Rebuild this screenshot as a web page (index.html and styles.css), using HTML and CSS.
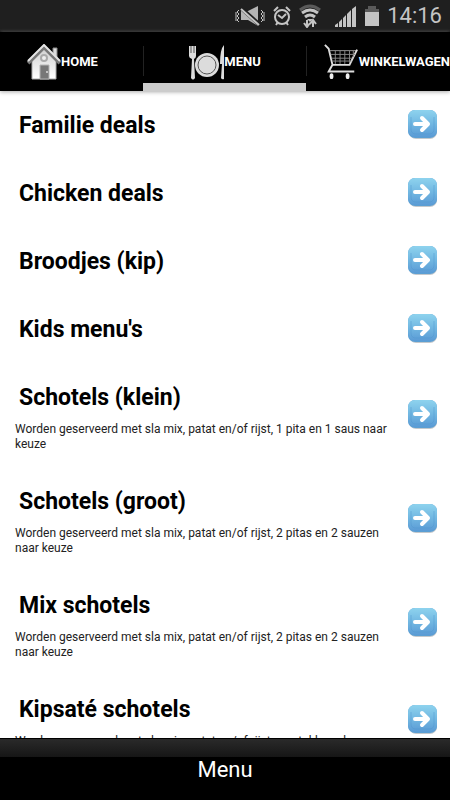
FILE: index.html
```html
<!DOCTYPE html>
<html lang="nl">
<head>
<meta charset="utf-8">
<meta name="viewport" content="width=device-width, initial-scale=1">
<title>Menu</title>
<link rel="stylesheet" href="styles.css">
</head>
<body>
<svg width="0" height="0" class="defs" aria-hidden="true">
  <defs>
    <linearGradient id="blue" x1="0" y1="0" x2="0" y2="1">
      <stop offset="0" stop-color="#8ed3ee"/><stop offset=".5" stop-color="#72b8e2"/><stop offset="1" stop-color="#5b9bd5"/>
    </linearGradient>
    <linearGradient id="wall" x1="0" y1="0" x2="0" y2="1">
      <stop offset="0" stop-color="#d0d0d0"/><stop offset="1" stop-color="#fff"/>
    </linearGradient>
    <symbol id="arrow" viewBox="0 0 30 30">
      <rect x="1" y="2" width="28" height="27" rx="7" fill="#c4c8cc"/>
      <rect x="0" y="0" width="29" height="28" rx="7" fill="#5b9fd3"/>
      <rect x="0" y="0" width="29" height="27" rx="7" fill="url(#blue)"/>
      <path d="M3 7v12q0 5 5 5h13q5 0 5-5V7" fill="none" stroke="#5297cf" opacity=".5"/>
      <path d="M7 14h12M14 8l6 6-6 6" fill="none" stroke="#fff" stroke-width="4" stroke-linejoin="round" stroke-linecap="round"/>
    </symbol>
  </defs>
</svg>
<header class="status">
  <svg width="30" height="22" viewBox="0 0 30 22" fill="none" stroke="#c4c4c4">
    <path d="M4 5l-2 2 2 2-2 2 2 2-2 2 2 2M1 7v9M26 5l2 2-2 2 2 2-2 2 2 2-2 2M29 7v9"/>
    <path d="M6 6h7l10-5v20l-10-6H6z" fill="#b4b4b4" stroke="none"/>
    <path d="M6 3l19 17" stroke="#1f1f1f" stroke-width="4"/>
    <path d="M6 4l18 16" stroke-width="2"/>
  </svg>
  <svg width="18" height="20" viewBox="0 0 18 20" fill="none" stroke="#c4c4c4" stroke-width="2">
    <circle cx="9" cy="11" r="7"/><path d="M1 5l4-4M17 5l-4-4M3 19l2-3M15 19l-2-3M5 9l4 3 4-4"/>
  </svg>
  <svg width="28" height="24" viewBox="0 0 28 24" fill="none" stroke="#c4c4c4">
    <path d="M1 6Q11-2 21 6" stroke="#5a5a5a" stroke-width="3"/>
    <path d="M3 9q8-6 16 0M6 13q5-4 10 0" stroke-width="3"/>
    <path d="M8 15h6l-3 3z" fill="#c4c4c4" stroke="none"/>
    <path d="M8 16v6M5 19l3 4 3-4M14 23v-6M11 20l3-4 3 4" stroke-width="2"/>
  </svg>
  <svg width="22" height="22" viewBox="0 0 22 22" fill="#c4c4c4">
    <path d="M0 22v-2l3-2v4zM4 22v-5l3-3v8zM8 22v-9l3-3v12zM12 22V9l4-4v17zM17 22V4l4-3v21z"/>
  </svg>
  <svg width="14" height="20" viewBox="1 0 14 20" fill="#c4c4c4">
    <path d="M4 0h8v3h3v3H1V3h3z" fill="#5a5a5a"/><path d="M1 6h14v14H1z"/>
  </svg>
  <time>14:16</time>
</header>
<nav class="tabs">
  <a href="#home" class="home">
    <svg width="34" height="36" viewBox="1 0 34 36">
      <path d="M27 4h4v12l-4-4z" fill="#ddd" stroke="#888"/>
      <path d="M6 17L18 5l12 12v18H6z" fill="url(#wall)" stroke="#aaa"/>
      <path d="M2 19L18 3l16 16" fill="none" stroke="#777" stroke-width="4"/>
      <path d="M2 17L18 1l16 16" fill="none" stroke="#e5e5e5" stroke-width="2"/>
      <circle cx="18" cy="14" r="3" fill="#eee" stroke="#aaa" stroke-width="2"/>
      <path d="M14 21h9v14h-9z" fill="#777" stroke="#b5b5b5"/><circle cx="21" cy="28" r="1" fill="#ddd"/>
    </svg><span>HOME</span></a>
  <a href="#menu" class="active" aria-current="page">
    <svg width="36" height="36" viewBox="0 0 36 36" fill="#dcdcdc">
      <path d="M1 2h7v10q0 2-2 3l1 19q-2 3-4 0l1-19q-3-1-3-3z"/>
      <path d="M3 2v7M6 2v7" stroke="#555"/>
      <circle cx="19" cy="21" r="12"/><circle cx="19" cy="21" r="9" fill="none" stroke="#555"/>
      <path d="M36 1q-4 4-4 19h2l-1 14q1 2 3 1z"/>
    </svg><span>MENU</span></a>
  <a href="#cart" class="cart">
    <svg width="36" height="36" viewBox="0 0 36 38" fill="none" stroke="#ddd">
      <path d="M1 1l4 4 4 17-4 7h27" stroke-width="2"/>
      <path d="M6 7h29" stroke="#999"/><path d="M35 6l-8 16H9" stroke-width="2"/>
      <path d="M7 11h26M8 15h22M9 18h20M12 7v14M17 7v14M22 7v14M27 7v13M31 7v7" stroke="#888"/>
      <ellipse cx="8" cy="34" rx="2" ry="3" fill="#eee" stroke="none"/><ellipse cx="25" cy="34" rx="2" ry="3" fill="#eee" stroke="none"/>
    </svg><span>WINKELWAGEN</span></a>
</nav>
<main class="list">
  <a class="row" href="#familie"><div><h2>Familie deals</h2></div><svg class="go"><use href="#arrow"/></svg></a>
  <a class="row" href="#chicken"><div><h2>Chicken deals</h2></div><svg class="go"><use href="#arrow"/></svg></a>
  <a class="row" href="#broodjes"><div><h2>Broodjes (kip)</h2></div><svg class="go"><use href="#arrow"/></svg></a>
  <a class="row" href="#kids"><div><h2>Kids menu's</h2></div><svg class="go"><use href="#arrow"/></svg></a>
  <a class="row described" href="#klein"><div><h2>Schotels (klein)</h2><p>Worden geserveerd met sla mix, patat en/of rijst, 1 pita en 1 saus naar keuze</p></div><svg class="go"><use href="#arrow"/></svg></a>
  <a class="row described" href="#groot"><div><h2>Schotels (groot)</h2><p>Worden geserveerd met sla mix, patat en/of rijst, 2 pitas en 2 sauzen naar keuze</p></div><svg class="go"><use href="#arrow"/></svg></a>
  <a class="row described" href="#mix"><div><h2>Mix schotels</h2><p>Worden geserveerd met sla mix, patat en/of rijst, 2 pitas en 2 sauzen naar keuze</p></div><svg class="go"><use href="#arrow"/></svg></a>
  <a class="row last" href="#kipsate"><div><h2>Kipsaté schotels</h2><p>Worden geserveerd met sla mix, patat en/of rijst, en stokbrood</p></div><svg class="go"><use href="#arrow"/></svg></a>
</main>
<footer class="bar"><button type="button">Menu</button></footer>
</body>
</html>
```
FILE: styles.css
```css
* { box-sizing: border-box; }
body {
  margin: 0;
  height: 100vh;
  display: flex;
  flex-direction: column;
  overflow: hidden;
  background: #fff;
  color: #000;
  font-family: Roboto, sans-serif;
}
a { color: inherit; text-decoration: none; }
svg { flex: none; }
.defs { position: absolute; }
.status {
  flex: none;
  height: 32px;
  display: flex;
  align-items: center;
  justify-content: flex-end;
  gap: 8px;
  padding-right: 8px;
  background: #1f1f1f;
  border-bottom: 1px solid #111;
  color: #c4c4c4;
  font-size: 22px;
  line-height: 30px;
}
.tabs {
  flex: none;
  height: 59px;
  display: grid;
  grid-template-columns: 143px 1fr 144px;
  background: #000;
  color: #fff;
  font-size: 13px;
  font-weight: 700;
  box-shadow: 0 1px 4px #aaa;
  z-index: 1;
}
.tabs a {
  display: flex;
  align-items: center;
  justify-content: center;
  min-width: 0;
  border-bottom: 8px solid #000;
  padding-top: 8px;
}
.tabs a + a {
  background: linear-gradient(#222, #222) 0 14px / 1px 30px no-repeat;
}
.tabs .home { padding-right: 18px; }
.tabs .cart { justify-content: flex-end; }
.tabs .active { border-bottom-color: #ccc; }
.list {
  flex: 1;
  min-height: 0;
  overflow: hidden;
}
.row {
  height: 68px;
  display: flex;
  align-items: center;
  padding-right: 12px;
}
.row div {
  flex: 1;
  align-self: flex-start;
  padding: 20px 8px 0 15px;
}
.described { height: 104px; }
.last { height: 90px; }
h2 {
  margin: 0;
  padding-left: 4px;
  font-size: 23px;
  line-height: 30px;
  font-weight: 700;
}
p {
  margin: 9px 0 0;
  font-size: 12px;
  line-height: 15px;
  color: #222;
}
.go { width: 30px; height: 30px; }
.bar {
  flex: none;
  display: flex;
  justify-content: center;
  height: 62px;
  padding-top: 17px;
  border-top: 1px solid #000;
  background: linear-gradient(#2a2a2a, #161616 18px, #000 18px);
  z-index: 1;
}
button {
  border: 0;
  padding: 0;
  height: 28px;
  background: none;
  color: #fff;
  font: 22px/28px Roboto, sans-serif;
}
```
